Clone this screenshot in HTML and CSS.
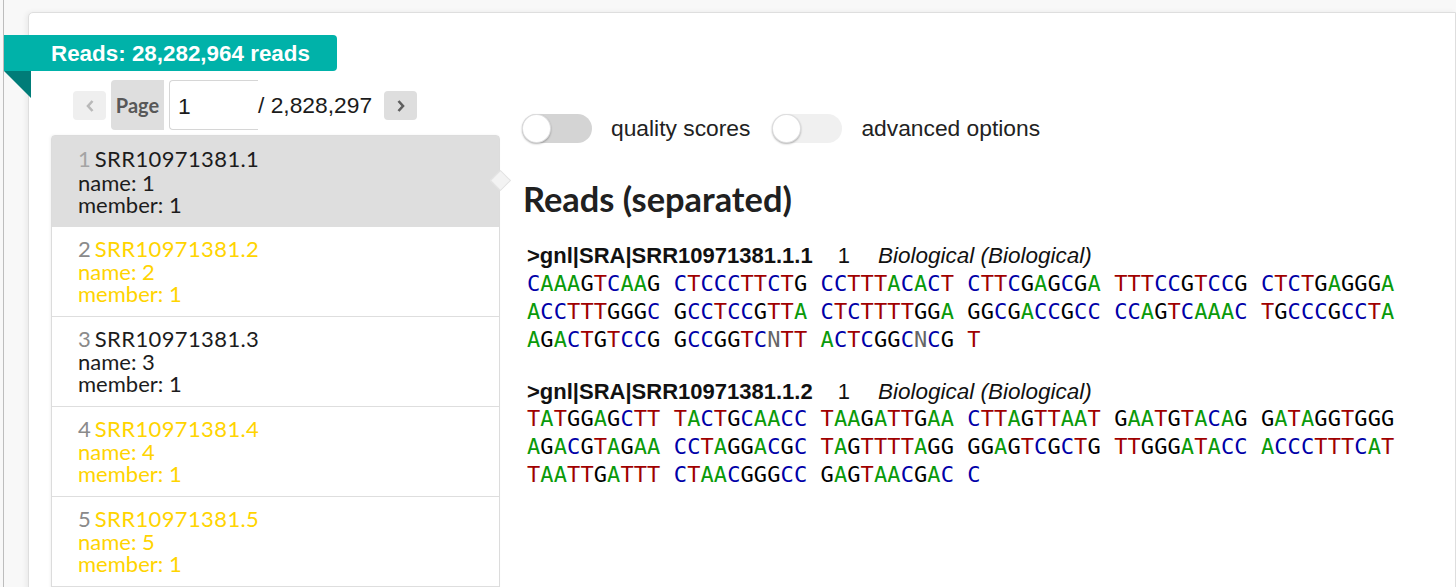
FILE: index.html
```html
<!DOCTYPE html>
<html lang="en">
<head>
<meta charset="utf-8">
<title>Reads</title>
<link rel="stylesheet" href="styles.css">
</head>
<body>
<div class="page">
  <div class="card">
    <div class="ribbon">Reads: 28,282,964 reads</div>
    <div class="ribbon-fold"></div>
    <div class="columns">
      <aside class="sidebar">
        <div class="pager">
          <button class="pager-btn disabled"><svg viewBox="0 0 10 14" width="10" height="14"><path d="M7.5 2 3 7l4.500 5" fill="none" stroke="#b9b9b9" stroke-width="2.600"/></svg></button>
          <div class="page-label">Page</div>
          <div class="page-input">1</div>
          <div class="page-total">/ 2,828,297</div>
          <button class="pager-btn next"><svg viewBox="0 0 10 14" width="10" height="14"><path d="M2.500 2 7 7l-4.500 5" fill="none" stroke="#5f5f5f" stroke-width="2.600"/></svg></button>
        </div>
        <div class="read-list">
          <div class="read active"><div><span class="num">1</span><span class="id">SRR10971381.1</span></div><div>name: 1</div><div>member: 1</div><i class="pointer"></i></div>
          <div class="read"><div class="yellow"><span class="num">2</span><span class="id">SRR10971381.2</span></div><div class="yellow">name: 2</div><div class="yellow">member: 1</div></div>
          <div class="read"><div><span class="num">3</span><span class="id">SRR10971381.3</span></div><div>name: 3</div><div>member: 1</div></div>
          <div class="read"><div class="yellow"><span class="num">4</span><span class="id">SRR10971381.4</span></div><div class="yellow">name: 4</div><div class="yellow">member: 1</div></div>
          <div class="read"><div class="yellow"><span class="num">5</span><span class="id">SRR10971381.5</span></div><div class="yellow">name: 5</div><div class="yellow">member: 1</div></div>
        </div>
      </aside>
      <main class="content">
        <div class="toggles">
          <div class="toggle dark"><span class="knob"></span></div>
          <span class="toggle-label">quality scores</span>
          <div class="toggle"><span class="knob"></span></div>
          <span class="toggle-label">advanced options</span>
        </div>
        <h1 class="title">Reads (separated)</h1>
        <section class="fasta">
          <div class="defline"><b>&gt;gnl|SRA|SRR10971381.1.1</b><span class="member">1</span><em>Biological (Biological)</em></div>
          <div class="seq">CAAAGTCAAG CTCCCTTCTG CCTTTACACT CTTCGAGCGA TTTCCGTCCG CTCTGAGGGA</div>
          <div class="seq">ACCTTTGGGC GCCTCCGTTA CTCTTTTGGA GGCGACCGCC CCAGTCAAAC TGCCCGCCTA</div>
          <div class="seq">AGACTGTCCG GCCGGTCNTT ACTCGGCNCG T</div>
        </section>
        <section class="fasta">
          <div class="defline"><b>&gt;gnl|SRA|SRR10971381.1.2</b><span class="member">1</span><em>Biological (Biological)</em></div>
          <div class="seq">TATGGAGCTT TACTGCAACC TAAGATTGAA CTTAGTTAAT GAATGTACAG GATAGGTGGG</div>
          <div class="seq">AGACGTAGAA CCTAGGACGC TAGTTTTAGG GGAGTCGCTG TTGGGATACC ACCCTTTCAT</div>
          <div class="seq">TAATTGATTT CTAACGGGCC GAGTAACGAC C</div>
        </section>
      </main>
    </div>
  </div>
</div>
<script src="script.js"></script>
</body>
</html>
```
FILE: styles.css
```css
* { box-sizing: border-box; }
html, body { margin: 0; height: 100%; overflow: hidden; }
body { background: #f8f8f8; font-family: "Liberation Sans", Arial, sans-serif; color: #1b1b1b; }
.page { height: 587px; padding: 12px 0 0 28px; background: linear-gradient(90deg, #f8f8f8 3px, #bdbdbd 3px, #bdbdbd 4px, #f8f8f8 4px); overflow: hidden; }
.card { position: relative; height: 700px; background: #fff; border: 1px solid #dedede; border-radius: 5px 0 0 0; box-shadow: -2px 0 5px rgba(0,0,0,.06); }
.ribbon { position: absolute; left: -25px; top: 22px; width: 333px; height: 36px; background: #00b2a9; border-radius: 0 4px 4px 0; color: #fff; font: 700 22.400px/37px "Liberation Sans", sans-serif; padding-left: 47px; white-space: nowrap; }
.ribbon-fold { position: absolute; left: -25px; top: 58px; width: 27px; height: 27px; background: #007c78; clip-path: polygon(0 0, 100% 0, 100% 100%); }
.columns { display: flex; align-items: flex-start; padding: 67px 0 0 22px; }
.sidebar { width: 449px; flex: none; }
.pager { display: flex; align-items: center; height: 50px; padding-left: 22px; margin-bottom: 5px; }
.pager-btn { width: 33px; height: 29px; padding: 0; border: 0; border-radius: 4px; background: #dedede; display: flex; align-items: center; justify-content: center; margin-top: 1px; }
.pager-btn.disabled { background: #efefef; }
.pager-btn.next { margin-left: 12px; }
.page-label { width: 53px; height: 50px; margin-left: 5px; background: #dedede; border-radius: 4px 0 0 4px; color: #585858; font: 700 20px/50px "Lato", sans-serif; text-align: center; }
.page-input { width: 89px; height: 50px; margin-left: 5px; border: 1px solid #d6d6d6; border-right: 0; border-radius: 4px 0 0 4px; font-size: 22.800px; line-height: 50px; padding-left: 8px; }
.page-total { font-size: 22.800px; white-space: nowrap; }
.read-list { border: 1px solid #dcdcdc; border-radius: 4px 4px 0 0; box-shadow: -1px 0 3px rgba(0,0,0,.05); background: #fff; }
.read { position: relative; height: 90px; padding: 11px 26px 0; border-bottom: 1px solid #dedede; font: 400 22px/22.500px "Lato", sans-serif; color: #1c1c1c; }
.read.active { height: 91px; padding-top: 12px; background: #dedede; }
.read.active > div:nth-child(2) { margin-top: 1px; }
.yellow { color: #ffd400; }
.num { color: #8a8a8a; margin-right: 4px; }
.id { letter-spacing: .38px; }
.active .num { color: #a4a4a4; }
.pointer { position: absolute; right: -9px; top: 37px; width: 15px; height: 15px; background: #f3f3f3; border: 1px solid #e2e2e2; transform: rotate(45deg); }
.content { flex: 1; padding: 0 0 0 23px; }
.toggles { display: flex; align-items: center; height: 32px; margin-top: 32px; }
.toggle { position: relative; width: 70px; height: 29px; border-radius: 15px; background: #f0f0f0; flex: none; }
.toggle.dark { background: #d4d4d4; margin-left: -1px; }
.knob { position: absolute; left: 0; top: 0; width: 29px; height: 29px; border-radius: 50%; background: #fff; box-shadow: 0 1px 2px rgba(0,0,0,.3), inset 0 0 0 1px rgba(34,36,38,.15); }
.toggle-label { font-size: 22.800px; margin-left: 19px; margin-right: 22px; color: #222; white-space: nowrap; }
.title { margin: 37px 0 0; font: 700 34.400px/36px "Lato", sans-serif; color: #202020; }
.fasta { margin: 25px 0 0 4px; }
.fasta + .fasta { margin-top: 24px; }
.fasta + .fasta .defline { line-height: 27px; }
.defline { font-size: 22px; line-height: 28px; color: #111; white-space: nowrap; }
.defline em { font-size: 22.500px; }
.member { margin: 0 28px 0 25px; }
.seq { font: 400 22px/28px "DejaVu Sans Mono", monospace; letter-spacing: .09px; white-space: pre; }
.A { color: #0a9a0a; }
.C { color: #0000a8; }
.G { color: #000; }
.T { color: #a00000; }
.N { color: #666; }
```
FILE: script.js
```js
document.querySelectorAll('.seq').forEach(function (line) {
  var text = line.textContent;
  line.textContent = '';
  text.split('').forEach(function (ch) {
    if (ch === ' ') { line.appendChild(document.createTextNode(' ')); return; }
    var s = document.createElement('span');
    s.className = ch;
    s.textContent = ch;
    line.appendChild(s);
  });
});
```
